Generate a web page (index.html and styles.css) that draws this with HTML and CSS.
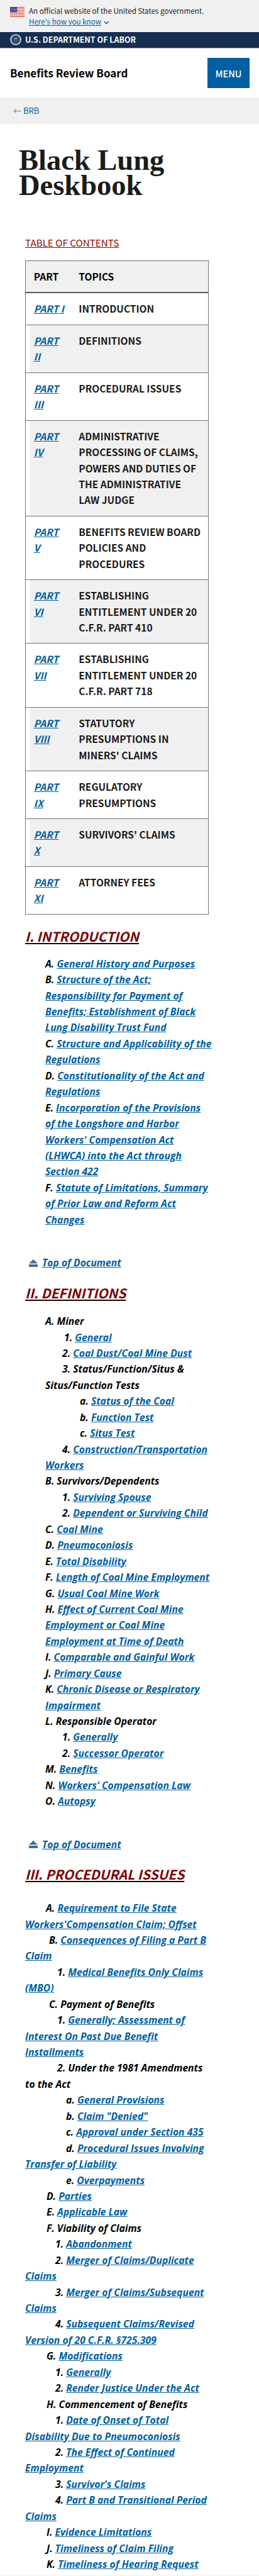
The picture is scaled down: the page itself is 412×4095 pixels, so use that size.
FILE: index.html
```html
<!DOCTYPE html>
<html lang="en">
<head>
<meta charset="utf-8">
<title>Black Lung Deskbook</title>
<link rel="stylesheet" href="styles.css">
</head>
<body>
<section class="gov-banner">
  <svg class="flag" viewBox="0 0 23 16" width="23" height="16" aria-hidden="true">
    <rect width="23" height="16" fill="#fff"/>
    <g fill="#d9503f"><rect width="23" height="1.3"/><rect y="2.5" width="23" height="1.2"/><rect y="4.9" width="23" height="1.2"/><rect y="7.3" width="23" height="1.2"/><rect y="9.7" width="23" height="1.2"/><rect y="12.1" width="23" height="1.2"/><rect y="14.6" width="23" height="1.4"/></g>
    <rect width="11" height="8.5" fill="#3b3f8f"/>
    <g fill="#dfe3f5"><circle cx="2" cy="2" r=".6"/><circle cx="5" cy="2" r=".6"/><circle cx="8" cy="2" r=".6"/><circle cx="3.5" cy="4.2" r=".6"/><circle cx="6.5" cy="4.2" r=".6"/><circle cx="9.3" cy="4.2" r=".6"/><circle cx="2" cy="6.4" r=".6"/><circle cx="5" cy="6.4" r=".6"/><circle cx="8" cy="6.4" r=".6"/></g>
  </svg>
  <div class="gov-text">
    <p>An official website of the United States government.</p>
    <p><a href="#">Here's how you know</a>
      <svg class="chev" viewBox="0 0 10 7" width="9" height="6" aria-hidden="true"><path d="M1 1.2 5 5.2 9 1.2" fill="none" stroke="#005ea2" stroke-width="1.6"/></svg>
    </p>
  </div>
</section>
<section class="agency-bar">
  <svg class="seal" viewBox="0 0 18 18" width="18" height="18" aria-hidden="true">
    <circle cx="9" cy="9" r="8.8" fill="#e3edf3"/>
    <circle cx="9" cy="9" r="7.4" fill="#2b6b8f"/>
    <circle cx="9" cy="9" r="5" fill="#1c3f63"/>
    <path d="M6.6 7.5h4.8v3.2L9 12.6 6.6 10.7z" fill="#a2453c"/>
    <rect x="6.6" y="6.2" width="4.8" height="1.6" fill="#9fb4c4"/>
  </svg>
  <span>U.S. DEPARTMENT OF LABOR</span>
</section>
<header class="site-header">
  <a class="site-name" href="#">Benefits Review Board</a>
  <button class="menu-btn" type="button">MENU</button>
</header>
<nav class="crumbs"><span class="arrow">←</span> <a href="#">BRB</a></nav>
<main>
  <h1>Black Lung<br>Deskbook</h1>
  <div class="content">
    <p class="toc-title"><a href="#">TABLE OF CONTENTS</a></p>
    <table class="parts">
      <colgroup><col class="col-part"><col></colgroup>
      <thead><tr><th>PART</th><th>TOPICS</th></tr></thead>
      <tbody>
        <tr><td><a href="#">PART I</a></td><td>INTRODUCTION</td></tr>
        <tr><td><a href="#">PART<br>II</a></td><td>DEFINITIONS</td></tr>
        <tr><td><a href="#">PART<br>III</a></td><td>PROCEDURAL ISSUES</td></tr>
        <tr><td><a href="#">PART<br>IV</a></td><td>ADMINISTRATIVE<br>PROCESSING OF CLAIMS,<br>POWERS AND DUTIES OF<br>THE ADMINISTRATIVE<br>LAW JUDGE</td></tr>
        <tr><td><a href="#">PART<br>V</a></td><td>BENEFITS REVIEW BOARD<br>POLICIES AND<br>PROCEDURES</td></tr>
        <tr><td><a href="#">PART<br>VI</a></td><td>ESTABLISHING<br>ENTITLEMENT UNDER 20<br>C.F.R. PART 410</td></tr>
        <tr><td><a href="#">PART<br>VII</a></td><td>ESTABLISHING<br>ENTITLEMENT UNDER 20<br>C.F.R. PART 718</td></tr>
        <tr><td><a href="#">PART<br>VIII</a></td><td>STATUTORY<br>PRESUMPTIONS IN<br>MINERS' CLAIMS</td></tr>
        <tr><td><a href="#">PART<br>IX</a></td><td>REGULATORY<br>PRESUMPTIONS</td></tr>
        <tr><td><a href="#">PART<br>X</a></td><td>SURVIVORS' CLAIMS</td></tr>
        <tr><td><a href="#">PART<br>XI</a></td><td>ATTORNEY FEES</td></tr>
      </tbody>
    </table>

    <h2 class="part-title"><a href="#">I. INTRODUCTION</a></h2>
    <ul class="outline boxed">
      <li>A. <a href="#">General History and Purposes</a></li>
      <li>B. <a href="#">Structure of the Act;<br>Responsibility for Payment of<br>Benefits; Establishment of Black<br>Lung Disability Trust Fund</a></li>
      <li>C. <a href="#">Structure and Applicability of the<br>Regulations</a></li>
      <li>D. <a href="#">Constitutionality of the Act and<br>Regulations</a></li>
      <li>E. <a href="#">Incorporation of the Provisions<br>of the Longshore and Harbor<br>Workers' Compensation Act<br>(LHWCA) into the Act through<br>Section 422</a></li>
      <li>F. <a href="#">Statute of Limitations, Summary<br>of Prior Law and Reform Act<br>Changes</a></li>
    </ul>
    <p class="to-top"><svg viewBox="0 0 14 12" width="14" height="12" aria-hidden="true"><path d="M7 0 14 6.5H0z" fill="#3d6f96"/><rect y="8" width="14" height="4" fill="#3d6f96"/></svg><a href="#">Top of Document</a></p>

    <h2 class="part-title"><a href="#">II. DEFINITIONS</a></h2>
    <ul class="outline boxed wide-gap">
      <li>A. Miner</li>
      <li class="in-1a">1. <a href="#">General</a></li>
      <li class="in-1">2. <a href="#">Coal Dust/Coal Mine Dust</a></li>
      <li class="in-1">3. Status/Function/Situs &amp;<br>Situs/Function Tests</li>
      <li class="in-2">a. <a href="#">Status of the Coal</a></li>
      <li class="in-2">b. <a href="#">Function Test</a></li>
      <li class="in-2">c. <a href="#">Situs Test</a></li>
      <li class="in-1">4. <a href="#">Construction/Transportation<br>Workers</a></li>
      <li>B. Survivors/Dependents</li>
      <li class="in-1">1. <a href="#">Surviving Spouse</a></li>
      <li class="in-1">2. <a href="#">Dependent or Surviving Child</a></li>
      <li>C. <a href="#">Coal Mine</a></li>
      <li>D. <a href="#">Pneumoconiosis</a></li>
      <li>E. <a href="#">Total Disability</a></li>
      <li>F. <a href="#">Length of Coal Mine Employment</a></li>
      <li>G. <a href="#">Usual Coal Mine Work</a></li>
      <li>H. <a href="#">Effect of Current Coal Mine<br>Employment or Coal Mine<br>Employment at Time of Death</a></li>
      <li>I. <a href="#">Comparable and Gainful Work</a></li>
      <li>J. <a href="#">Primary Cause</a></li>
      <li>K. <a href="#">Chronic Disease or Respiratory<br>Impairment</a></li>
      <li>L. Responsible Operator</li>
      <li class="in-1">1. <a href="#">Generally</a></li>
      <li class="in-1">2. <a href="#">Successor Operator</a></li>
      <li>M. <a href="#">Benefits</a></li>
      <li>N. <a href="#">Workers' Compensation Law</a></li>
      <li>O. <a href="#">Autopsy</a></li>
    </ul>
    <p class="to-top"><svg viewBox="0 0 14 12" width="14" height="12" aria-hidden="true"><path d="M7 0 14 6.5H0z" fill="#3d6f96"/><rect y="8" width="14" height="4" fill="#3d6f96"/></svg><a href="#">Top of Document</a></p>

    <h2 class="part-title"><a href="#">III. PROCEDURAL ISSUES</a></h2>
    <ul class="outline flush">
      <li class="p-a">A. <a href="#">Requirement to File State<br>Workers'Compensation Claim; Offset</a></li>
      <li class="p-b">B. <a href="#">Consequences of Filing a Part B<br>Claim</a></li>
      <li class="p-c">1. <a href="#">Medical Benefits Only Claims<br>(MBO)</a></li>
      <li class="p-b">C. Payment of Benefits</li>
      <li class="p-c">1. <a href="#">Generally; Assessment of<br>Interest On Past Due Benefit<br>Installments</a></li>
      <li class="p-c">2. Under the 1981 Amendments<br>to the Act</li>
      <li class="p-d">a. <a href="#">General Provisions</a></li>
      <li class="p-d">b. <a href="#">Claim "Denied"</a></li>
      <li class="p-d">c. <a href="#">Approval under Section 435</a></li>
      <li class="p-d">d. <a href="#">Procedural Issues Involving<br>Transfer of Liability</a></li>
      <li class="p-d">e. <a href="#">Overpayments</a></li>
      <li class="p-e">D. <a href="#">Parties</a></li>
      <li class="p-e">E. <a href="#">Applicable Law</a></li>
      <li class="p-e">F. Viability of Claims</li>
      <li class="p-f">1. <a href="#">Abandonment</a></li>
      <li class="p-f">2. <a href="#">Merger of Claims/Duplicate<br>Claims</a></li>
      <li class="p-f">3. <a href="#">Merger of Claims/Subsequent<br>Claims</a></li>
      <li class="p-f">4. <a href="#">Subsequent Claims/Revised<br>Version of 20 C.F.R. §725.309</a></li>
      <li class="p-e">G. <a href="#">Modifications</a></li>
      <li class="p-f">1. <a href="#">Generally</a></li>
      <li class="p-f">2. <a href="#">Render Justice Under the Act</a></li>
      <li class="p-e">H. Commencement of Benefits</li>
      <li class="p-f">1. <a href="#">Date of Onset of Total<br>Disability Due to Pneumoconiosis</a></li>
      <li class="p-f">2. <a href="#">The Effect of Continued<br>Employment</a></li>
      <li class="p-f">3. <a href="#">Survivor's Claims</a></li>
      <li class="p-f">4. <a href="#">Part B and Transitional Period<br>Claims</a></li>
      <li class="p-e">I. <a href="#">Evidence Limitations</a></li>
      <li class="p-e">J. <a href="#">Timeliness of Claim Filing</a></li>
      <li class="p-e">K. <a href="#">Timeliness of Hearing Request</a></li>
    </ul>
  </div>
</main>
</body>
</html>
```
FILE: styles.css
```css
* { box-sizing: border-box; }
html, body { margin: 0; padding: 0; background: #fff; }
body {
  font-family: "Noto Sans CJK JP", "Open Sans", sans-serif;
  font-size: 15.5px;
  line-height: 25.44px;
  color: #1b1b1b;
  height: 4095px;
  overflow: hidden;
  border-bottom: 1px solid #f0f0f0;
}
a { color: #005ea2; }
p { margin: 0; }

.gov-banner {
  display: flex;
  height: 51px;
  padding: 9px 16px 0;
  background: #f0f0f0;
  font-size: 11.6px;
  line-height: 17px;
}
.flag { margin: 2px 7px 0 0; flex: none; }
.gov-text a { text-underline-offset: 1px; }
.chev { margin-left: 1px; }

.agency-bar {
  display: flex;
  align-items: center;
  height: 26px;
  padding: 0 16px 1px;
  background: #162e51;
  border-bottom: 1px solid #a9aeb1;
  color: #fff;
  font-size: 12.5px;
  font-weight: 700;
}
.seal { margin-right: 6px; flex: none; }

.site-header {
  display: flex;
  justify-content: space-between;
  align-items: center;
  height: 78px;
  padding: 0 15px 0 16px;
}
.site-name {
  color: #000;
  font-size: 17px;
  font-weight: 700;
  text-decoration: none;
}
.menu-btn {
  width: 67px;
  height: 48px;
  border: 0;
  border-radius: 0;
  background: #005ea2;
  color: #fff;
  font: 500 14.5px "Noto Sans CJK JP", "Open Sans", sans-serif;
}

.crumbs {
  height: 42px;
  padding: 9px 21px 0;
  background: #f0f0f0;
  font-size: 13px;
  line-height: 24px;
}
.crumbs a { text-decoration: none; }
.arrow { color: #71767a; }

h1 {
  margin: 0;
  padding: 38px 0 0 30px;
  font-family: "Liberation Serif", serif;
  font-size: 46.5px;
  font-weight: 700;
  line-height: 40px;
}

.content { padding: 0 40px; }

.toc-title { margin-top: 57px; font-size: 15.2px; line-height: 26px; }
.toc-title a { color: #8b0a03; }

.parts {
  width: 292px;
  margin-top: 16px;
  border: 1px solid #71767a;
  border-collapse: collapse;
  table-layout: fixed;
}
.col-part { width: 72px; }
.parts th, .parts td {
  padding: 12px 12.8px;
  border: 0;
  border-bottom: 1px solid #71767a;
  text-align: left;
  vertical-align: top;
  font-weight: 700;
  white-space: nowrap;
}
.parts th { background: #f0f0f0; border-bottom: 2px solid #565c65; color: #000; }
.parts td a { font-style: italic; }
.parts tbody tr:nth-child(even) td { background: #f0f0f0; }
.parts tbody tr:nth-child(even) td:first-child { box-shadow: inset 6px 0 #fff; }

.part-title {
  margin: 21px 0 0;
  font-size: 21px;
  font-style: italic;
  font-weight: 700;
  line-height: 26px;
}
.part-title a { color: #7a0000; text-decoration-color: #1b0000; }

.outline {
  list-style: none;
  margin: 19px 0 0;
  padding: 0;
  font-family: "Open Sans", sans-serif;
  font-size: 15.7px;
  font-style: italic;
  font-weight: 700;
  color: #000;
  white-space: nowrap;
}
.boxed { padding-left: 32px; }
.wide-gap { margin-top: 20.5px; }
.flush { margin-top: 29px; }

.in-1a { text-indent: 30px; }
.in-1 { text-indent: 27px; }
.in-2 { text-indent: 55px; }
.p-a { text-indent: 33px; }
.p-b { text-indent: 38px; }
.p-c { text-indent: 51px; }
.p-d { text-indent: 65px; }
.p-e { text-indent: 34px; }
.p-f { text-indent: 48px; }

.to-top {
  display: flex;
  align-items: center;
  margin: 43px 0 0 6px;
  font-family: "Open Sans", sans-serif;
  font-size: 15.7px;
  font-style: italic;
  font-weight: 700;
}
.to-top svg { margin-right: 7px; }
```
